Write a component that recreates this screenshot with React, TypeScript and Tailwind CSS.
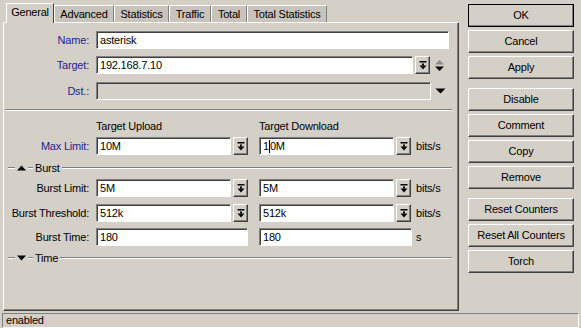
import type { ReactNode } from 'react'

const SUNKEN =
  'border border-t-[#808080] border-l-[#808080] border-r-white border-b-white shadow-[inset_1px_1px_0_#404040]'
const RAISED =
  'border border-t-white border-l-white border-r-[#404040] border-b-[#404040] shadow-[inset_-1px_-1px_0_#808080]'

const TABS = [
  { name: 'Advanced', w: 'w-[60px]' },
  { name: 'Statistics', w: 'w-[55px]' },
  { name: 'Traffic', w: 'w-[42px]' },
  { name: 'Total', w: 'w-[36px]' },
  { name: 'Total Statistics', w: 'w-[80px]' },
]

const BUTTON_GROUPS = [
  ['Cancel', 'Apply'],
  ['Disable', 'Comment', 'Copy', 'Remove'],
  ['Reset Counters', 'Reset All Counters', 'Torch'],
]

function Input({ w, children, disabled }: { w: string; children?: ReactNode; disabled?: boolean }) {
  return (
    <div
      className={`${w} h-[18px] flex items-center pl-[3px] whitespace-nowrap overflow-hidden ${SUNKEN} ${
        disabled ? 'bg-[#d4d0c8]' : 'bg-white'
      }`}
    >
      {children}
    </div>
  )
}

function DropBtn({ className = '' }: { className?: string }) {
  return (
    <div className={`w-[15px] h-[18px] flex items-center justify-center bg-[#d4d0c8] ${RAISED} ${className}`}>
      <svg width="8" height="9" viewBox="0 0 8 9">
        <rect x="0.5" y="0" width="7" height="1.5" fill="#000" />
        <rect x="3" y="2.5" width="2" height="2" fill="#000" />
        <polygon points="0.5,4.5 7.5,4.5 4,8.5" fill="#000" />
      </svg>
    </div>
  )
}

function Row({ label, blue, children, className = '' }: { label: string; blue?: boolean; children: ReactNode; className?: string }) {
  return (
    <div className={`flex items-center h-[18px] ${className}`}>
      <div className={`w-[85px] mr-[7px] text-right whitespace-nowrap ${blue ? 'text-[#23238f]' : 'text-black'}`}>
        {label}
      </div>
      {children}
    </div>
  )
}

function Etch({ className = '' }: { className?: string }) {
  return <div className={`h-[2px] border-t border-b border-t-[#808080] border-b-white ${className}`} />
}

function Group({ label, open }: { label: string; open?: boolean }) {
  return (
    <div className="flex items-center h-[14px] ml-[4px] mr-[6px]">
      <Etch className="w-[7px]" />
      <svg width="11" height="6" viewBox="0 0 11 6" className="mx-[1px]">
        <polygon points={open ? '1,5.5 10,5.5 5.5,0.5' : '1,0.5 10,0.5 5.5,5.5'} fill="#000" />
      </svg>
      <Etch className="w-[5px]" />
      <span className="mx-[2px]">{label}</span>
      <Etch className="flex-1" />
    </div>
  )
}

function WinButton({ label, def }: { label: string; def?: boolean }) {
  return (
    <div
      className={`h-[23px] w-[106px] flex items-center justify-center bg-[#d4d0c8] ${
        def ? 'outline outline-1 outline-black -outline-offset-1 ' : ''
      }${RAISED}`}
    >
      {label}
    </div>
  )
}

export default function App() {
  return (
    <div className="w-[581px] h-[328px] bg-[#d4d0c8] text-black text-[11px] leading-none tracking-[-0.2px] font-['Liberation_Sans',Arial,sans-serif] flex flex-col overflow-hidden select-none">
      <div className="flex h-[311px]">
        {/* tabs + panel */}
        <div className="w-[459px] pl-[3px] pt-[3px] flex flex-col">
          <div className="flex items-end h-[19px] pl-[3px]">
            <div className="relative z-10 w-[48px] h-[20px] -mb-px flex items-center justify-center pb-[3px] bg-[#d4d0c8] border-t border-l border-r border-t-white border-l-white border-r-[#404040]">
              General
            </div>
            {TABS.map(t => (
              <div
                key={t.name}
                className={`${t.w} h-[17px] flex items-center justify-center bg-[#c8c4bc] border-t border-l border-r border-t-white border-l-white border-r-[#808080] whitespace-nowrap`}
              >
                {t.name}
              </div>
            ))}
          </div>

          <div className="flex-1 flex flex-col border border-t-white border-l-white border-r-[#404040] border-b-[#404040] shadow-[inset_-1px_-1px_0_#808080] pt-[8px]">
            <Row label="Name:" blue>
              <Input w="w-[353px]">asterisk</Input>
            </Row>
            <Row label="Target:" blue className="mt-[7px]">
              <Input w="w-[317px]">192.168.7.10</Input>
              <DropBtn className="ml-[2px]" />
              <svg width="11" height="13" viewBox="0 0 11 13" className="ml-[4px]">
                <polygon points="1,5.5 10,5.5 5.5,1" fill="#8a8a8a" />
                <polygon points="1,7.5 10,7.5 5.5,12" fill="#000" />
              </svg>
            </Row>
            <Row label="Dst.:" blue className="mt-[8px]">
              <Input w="w-[335px]" disabled />
              <svg width="11" height="6" viewBox="0 0 11 6" className="ml-[4px]">
                <polygon points="0.5,0.5 10.5,0.5 5.5,5.5" fill="#000" />
              </svg>
            </Row>

            <Etch className="mt-[9px] ml-[1px] mr-[6px]" />

            <div className="flex items-center h-[14px] mt-[8px] pl-[92px]">
              <span className="w-[163px]">Target Upload</span>
              <span>Target Download</span>
            </div>

            <Row label="Max Limit:" blue className="mt-[4px]">
              <Input w="w-[135px]">10M</Input>
              <DropBtn className="ml-[2px]" />
              <Input w="w-[135px] ml-[11px]">
                1<span className="inline-block w-px h-[13px] bg-black" />
                0M
              </Input>
              <DropBtn className="ml-[2px]" />
              <span className="ml-[5px]">bits/s</span>
            </Row>

            <div className="mt-[6px]">
              <Group label="Burst" open />
            </div>

            <Row label="Burst Limit:" className="mt-[4px]">
              <Input w="w-[135px]">5M</Input>
              <DropBtn className="ml-[2px]" />
              <Input w="w-[135px] ml-[11px]">5M</Input>
              <DropBtn className="ml-[2px]" />
              <span className="ml-[5px]">bits/s</span>
            </Row>
            <Row label="Burst Threshold:" className="mt-[7px]">
              <Input w="w-[135px]">512k</Input>
              <DropBtn className="ml-[2px]" />
              <Input w="w-[135px] ml-[11px]">512k</Input>
              <DropBtn className="ml-[2px]" />
              <span className="ml-[5px]">bits/s</span>
            </Row>
            <Row label="Burst Time:" className="mt-[6px]">
              <Input w="w-[152px]">180</Input>
              <Input w="w-[153px] ml-[11px]">180</Input>
              <span className="ml-[4px]">s</span>
            </Row>

            <div className="mt-[5px]">
              <Group label="Time" />
            </div>
          </div>
        </div>

        {/* buttons */}
        <div className="pl-[9px] pt-[4px] flex flex-col">
          <WinButton label="OK" def />
          {BUTTON_GROUPS.map((g, gi) => (
            <div key={gi} className={`flex flex-col gap-[3px] ${gi === 0 ? 'mt-[3px]' : 'mt-[9px]'}`}>
              {g.map(b => (
                <WinButton key={b} label={b} />
              ))}
            </div>
          ))}
        </div>
      </div>

      {/* status bar */}
      <div className="mt-[2px] mx-[2px] h-[15px] flex items-center pl-[3px] border border-t-[#808080] border-l-[#808080] border-r-white border-b-white">
        enabled
      </div>
    </div>
  )
}
